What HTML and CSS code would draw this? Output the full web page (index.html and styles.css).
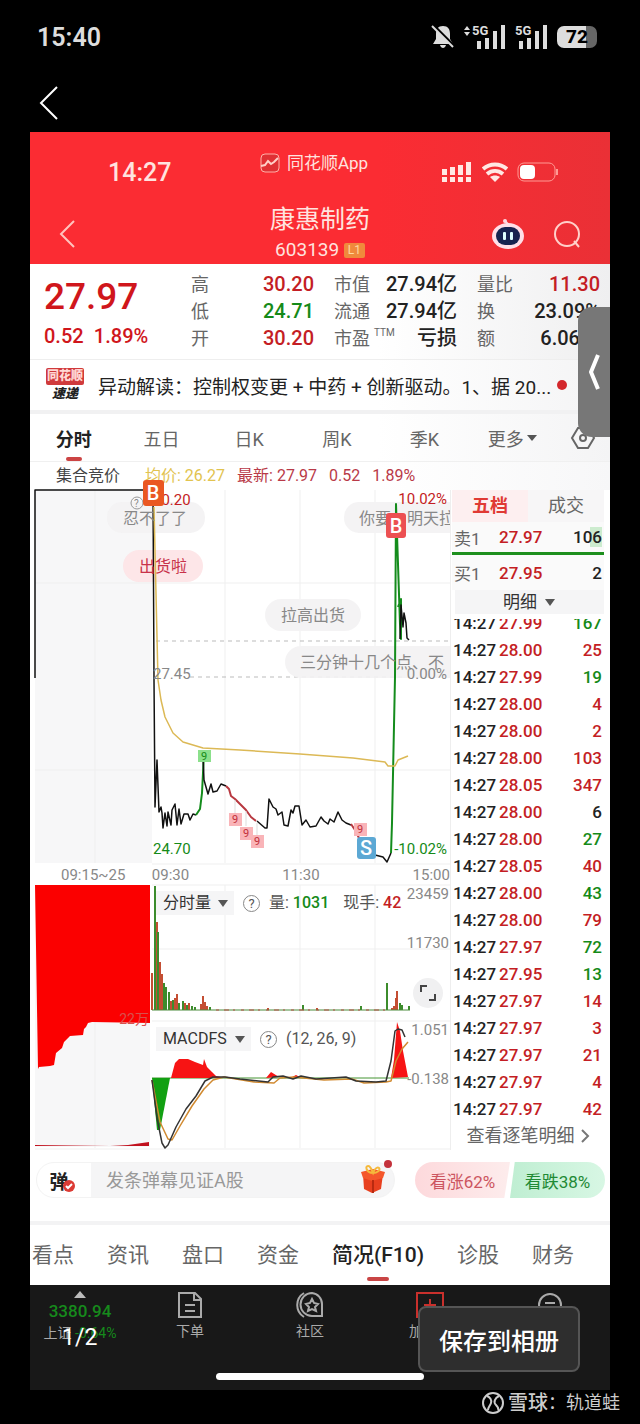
FILE: index.html
```html
<!DOCTYPE html>
<html lang="zh-CN">
<head>
    <meta charset="UTF-8">
    <meta name="viewport" content="width=device-width, initial-scale=1.0">
    <title>康惠制药 603139</title>
    <link rel="stylesheet" href="styles.css">
</head>
<body>
    <div class="status-bar">
        <span class="clock">15:40</span>
        <div class="status-icons">
            <svg width="24" height="24" viewBox="0 0 24 24">
                <path d="M12 1c-5 0-7 3-7 8v5l-3 5h20l-3-5V9c0-5-2-8-7-8zM9 20h6c-1 4-5 4-6 0z" fill="#ddd"/>
                <path d="M2 0l21 21" stroke="#000" stroke-width="3"/>
                <path d="M1 1l21 21" stroke="#ddd" stroke-width="2"/>
            </svg>
            <svg width="44" height="28" viewBox="0 0 44 28" fill="#ddd">
                <path d="M1 7l3-4 3 4zM1 9l3 4 3-4z"/>
                <text x="9" y="12" class="net">5G</text>
                <path d="M14 18h4v8h-4zM22 15h4v11h-4zM30 8h4v18h-4zM38 2h4v24h-4z"/>
            </svg>
            <svg width="34" height="28" viewBox="0 0 34 28" fill="#ddd">
                <text x="0" y="12" class="net">5G</text>
                <path d="M4 18h4v8H4zM12 15h4v11h-4zM20 8h4v18h-4zM28 2h4v24h-4z"/>
            </svg>
            <span class="battery">72</span>
        </div>
    </div>

    <div class="viewer-bar">
        <button class="icon-button" aria-label="返回">
            <svg width="20" height="34" viewBox="0 0 20 34"><path d="M18 1L2 17l16 16" fill="none" stroke="#fff" stroke-width="2"/></svg>
        </button>
    </div>

    <main class="shot">
        <header class="app-header">
            <div class="phone-status">
                <span class="phone-time">14:27</span>
                <span class="brand">
                    <svg width="20" height="20" viewBox="0 0 20 20" fill="none" stroke="#ffb0a8">
                        <rect x="1" y="1" width="18" height="18" rx="4" fill="#e03034"/>
                        <path d="M1 13l4-1 3-4 3 3 3-2 4-4" stroke="#ffd0c8" stroke-width="2"/>
                    </svg>
                    同花顺App
                </span>
                <span class="phone-icons">
                    <svg width="32" height="22" viewBox="0 0 32 22" fill="#ffe8e4">
                        <path d="M1 8h5v6H1zM9 6h5v8H9zM17 4h5v10h-5zM25 1h5v13h-5zM1 16h5v5H1zM9 16h5v5H9zM17 16h5v5h-5zM25 16h5v5h-5z"/>
                    </svg>
                    <svg width="26" height="20" viewBox="0 0 26 20" fill="none" stroke="#ffe8e4" stroke-width="4">
                        <path d="M1 7c7-6 17-6 24 0M5 12c5-4 11-4 16 0"/>
                        <path d="M13 20l-5-5c3-2 7-2 10 0z" fill="#ffe8e4" stroke="none"/>
                    </svg>
                    <svg width="42" height="20" viewBox="0 0 42 20">
                        <rect x="1" y="1" width="37" height="18" rx="6" fill="none" stroke="#ff9a94"/>
                        <rect x="3" y="3" width="15" height="14" rx="4" fill="#fff"/>
                        <path d="M40 7v6" stroke="#ff9a94" stroke-width="2"/>
                    </svg>
                </span>
            </div>
            <div class="title-bar">
                <button class="icon-button" aria-label="返回">
                    <svg width="18" height="28" viewBox="0 0 18 28"><path d="M16 1L3 14l13 13" fill="none" stroke="#ffc4be" stroke-width="2"/></svg>
                </button>
                <div class="title">
                    <h1>康惠制药</h1>
                    <p>603139 <span class="level">L1</span></p>
                </div>
                <div class="title-actions">
                    <button class="icon-button" aria-label="智能助手">
                        <svg width="34" height="32" viewBox="0 0 34 32">
                            <circle cx="14" cy="3" r="2" fill="#ffd8e0"/>
                            <path d="M14 3l4 4" stroke="#ffd8e0" stroke-width="2"/>
                            <ellipse cx="17" cy="18" rx="16" ry="13" fill="#ffdfe8"/>
                            <rect x="5" y="9" width="24" height="18" rx="9" fill="#162350"/>
                            <rect x="12" y="14" width="3" height="8" rx="1" fill="#dff"/>
                            <rect x="19" y="14" width="3" height="8" rx="1" fill="#dff"/>
                        </svg>
                    </button>
                    <button class="icon-button" aria-label="搜索">
                        <svg width="30" height="30" viewBox="0 0 30 30" fill="none" stroke="#ffd0ca" stroke-width="2">
                            <circle cx="15" cy="15" r="12"/><path d="M22 22l5 6"/>
                        </svg>
                    </button>
                </div>
            </div>
        </header>

        <section class="quote">
            <div class="last">
                <strong>27.97</strong>
                <span>0.52&ensp;1.89%</span>
            </div>
            <dl>
                <dt>高</dt><dd class="up">30.20</dd>
                <dt>低</dt><dd class="down">24.71</dd>
                <dt>开</dt><dd class="up">30.20</dd>
            </dl>
            <dl>
                <dt>市值</dt><dd>27.94亿</dd>
                <dt>流通</dt><dd>27.94亿</dd>
                <dt>市盈<sup>TTM</sup></dt><dd>亏损</dd>
            </dl>
            <dl>
                <dt>量比</dt><dd class="up">11.30</dd>
                <dt>换</dt><dd>23.09%</dd>
                <dt>额</dt><dd>6.06亿</dd>
            </dl>
        </section>

        <a class="news" href="#">
            <span class="news-logo"><b>同花顺</b><i>速递</i></span>
            <span class="news-text">异动解读：控制权变更 + 中药 + 创新驱动。1、据 20...</span>
            <span class="news-dot"></span>
        </a>

        <nav class="periods">
            <button class="active">分时</button>
            <button>五日</button>
            <button>日K</button>
            <button>周K</button>
            <button>季K</button>
            <button>更多<span class="caret"></span></button>
            <button aria-label="设置">
                <svg width="26" height="24" viewBox="0 0 26 24" fill="none" stroke="#666" stroke-width="2">
                    <path d="M8 2h10l6 10-6 10H8L2 12z"/><circle cx="13" cy="12" r="3"/>
                </svg>
            </button>
        </nav>

        <div class="legend">
            <span class="auction">集合竞价</span>
            <span class="avg">均价: 26.27</span>
            <span class="now">最新: 27.97</span>
            <span class="now">0.52</span>
            <span class="now">1.89%</span>
        </div>

        <div class="market">
            <section class="charts">
                <!-- price -->
                <svg class="chart" viewBox="30 490 420 375">
                    <rect x="35" y="490" width="117" height="373" fill="#f7f7f8"/>
                    <path class="grid" d="M95 490V863M225 490V863M300 490V863M375 490V863M35 583H450M35 770H450M152 864H450"/>
                    <path class="dash" d="M156 641H450M190 677H406"/>
                    <rect class="bubble" x="107" y="502" width="98" height="31" rx="15"/>
                    <rect class="bubble hot" x="123" y="550" width="80" height="32" rx="16"/>
                    <rect class="bubble" x="344" y="502" width="130" height="31" rx="15"/>
                    <rect class="bubble" x="265" y="599" width="96" height="32" rx="16"/>
                    <rect class="bubble" x="285" y="646" width="190" height="32" rx="16"/>

                    <path class="line" d="M35 678V490H153"/>
                    <path class="line" d="M153 490l1 190 1 127 2-47 2 52 2-5 1 6 1 15 2-15 2 13 1-14 3 13 1-15 3-6 2 21 2-16 2 15 3-10h4l2 6 3-6 3 1"/>
                    <path class="line green" d="M196 815l4-6 2-16 2-40"/>
                    <path class="line" d="M203 756l1 24 4 14 3-10 2 8 4-1 4-7 5 2"/>
                    <path class="line red" d="M226 786l3 3 2 7 4 3 5 5 6 6 5 7 5 4"/>
                    <path class="line" d="M257 821l8 7h2l2-29 4 8 3 2 2 6 4-3 2 13 4 1 3-16 2 3 2-7h4l3 19 4-5 4 7 6-1 5-9 3 4 4 3 2-5 4 3 4-10 4 8 4 3 5 2"/>
                    <path class="line red" d="M351 824l4 6 3 6 2 4"/>
                    <path class="line" d="M375 855l8 2 4 5 4-9"/>
                    <path class="line green" d="M391 853l1-30 3-146 1-173 4 120 1 15v-40l-3 8"/>
                    <path class="line" d="M400 639l1-34 2 22 1-14 2 10 1 15 2 2"/>
                    <path class="average" d="M154 507l4 173 3 20 4 17 8 16 10 9 20 6 37 2 60 4 53 4 32 4 3 4h7l3-6 10-4"/>
                    <path d="M235 800v13M246 811v15M257 823v12" stroke="#ddd"/>

                    <g class="bubble-text">
                        <circle cx="137" cy="503" r="6" fill="none" stroke="#999"/>
                        <text x="134" y="507" font-size="10">?</text>
                        <text x="123" y="524">忍不了了</text>
                        <text x="139" y="572" class="hot">出货啦</text>
                        <text x="359" y="524">你要　明天拉</text>
                        <text x="281" y="621">拉高出货</text>
                        <text x="300" y="668">三分钟十几个点、不</text>
                    </g>
                    <g class="axis">
                        <text x="153" y="505" class="up">30.20</text>
                        <text x="153" y="679">27.45</text>
                        <text x="153" y="854" class="down">24.70</text>
                        <g text-anchor="end">
                            <text x="447" y="504" class="up">10.02%</text>
                            <text x="447" y="679">0.00%</text>
                            <text x="447" y="854" class="down">-10.02%</text>
                        </g>
                    </g>
                    <g class="nine">
                        <rect x="198" y="750" width="13" height="12" fill="#8be08b"/><text x="204" y="760" class="down">9</text>
                        <rect x="229" y="813" width="13" height="13"/><text x="235" y="823">9</text>
                        <rect x="240" y="827" width="13" height="13"/><text x="246" y="837">9</text>
                        <rect x="251" y="835" width="13" height="13"/><text x="257" y="845">9</text>
                        <rect x="354" y="823" width="13" height="13"/><text x="360" y="833">9</text>
                    </g>
                    <g class="trade">
                        <rect x="143" y="480" width="21" height="26" rx="3" fill="#ea5722"/><text x="153" y="500">B</text>
                        <rect x="386" y="513" width="20" height="25" rx="3" fill="#ec5052"/><text x="396" y="533">B</text>
                        <rect x="357" y="837" width="19" height="22" rx="3" fill="#5ca8d4"/><text x="366" y="855">S</text>
                    </g>
                </svg>

                <div class="times">
                    <span>09:15~25</span>
                    <div><span>09:30</span><span>11:30</span><span>15:00</span></div>
                </div>

                <div class="indicators">
                    <!-- volume and MACD -->
                    <svg class="chart" viewBox="30 885 420 265">
                        <rect x="35" y="885" width="115" height="262" fill="#f7f7f8"/>
                        <path class="grid" d="M95 885V1148M225 885V1148M300 885V1148M375 885V1148M152 949H450M152 1021H450M35 1149H450M152 885H450"/>
                        <path d="M35 885H150V1023L92 1022 88 1023 86 1027 84 1029 83 1035 70 1036 64 1042 62 1048 56 1053 54 1065 50 1066 39 1067 38 1069Z" fill="#fb0000"/>
                        <path d="M35 1145l75 1 18-1 21-3v4H35z" fill="#c1121f"/>
                        <text x="149" y="1024" class="faint" text-anchor="end">22万</text>

                        <path d="M152 1010V973M157 1010V922M160 1010V962M162 1010V974M171 1010V1001M175 1010V998M177 1010V994M185 1010V1003M189 1010V1003M201 1010V1004M203 1010V996M205 1010V1002M207 1010V1006M268 1010V1008M317 1010V1008M392 1010V1008M394 1010V1006M396 1010V998M397 1010V991" stroke="#c44e33" stroke-width="2" fill="none"/>
                        <path d="M155 1010V886M158 1010V932M164 1010V983M166 1010V987M169 1010V992M173 1010V1000M179 1010V1003M183 1010V1001M187 1010V1005M192 1010V1006M195 1010V1007M210 1010V1007M303 1010V1005M361 1010V1006M387 1010V983M400 1010V1003M402 1010V1005M409 1010V1006" stroke="#3c8c2c" stroke-width="2" fill="none"/>
                        <path d="M152 1010H410" stroke="#4c8b3c" stroke-width="1" fill="none"/>
                        <path d="M216 1010H390" stroke="#b64a42" stroke-dasharray="3 5 5 4 2 6" fill="none"/>

                        <path d="M152 1078H409" stroke="#459433"/>
                        <path d="M152 1078h18l-10 52h-3z" fill="#12a012"/>
                        <path d="M171 1078l4-15 4-4h9l7 3 8 3 1-6 3 8 5 5 4 4 9 2zM266 1078l5-6 8 5zM290 1078l6-3 6 3zM391 1078l3-18 3-38 3 9 3 20 5 26z" fill="#f71414"/>
                        <path class="thin" stroke="#d18a30" d="M152 1080l8 42 8 17 4 1 8-14 12-20 12-17 9-9 11-3 30 5 20 1 6-5 14-1 30 3 28-1 12 4 22-1 5-1 5-20 6-12 6-7"/>
                        <path class="thin" stroke="#333" d="M152 1080l5 38 5 25 3 5 3-3 8-18 10-18 10-13 9-15 8-4h12l15 2 28 3 5-5 10-1 10 3 8-3 15 3 30-2 10 4 20 1 10-1 5-20 4-30 3-2 4 1 3 7"/>

                        <g class="axis" text-anchor="end">
                            <text x="449" y="899">23459</text>
                            <text x="449" y="948">11730</text>
                            <text x="449" y="1035">1.051</text>
                            <text x="449" y="1084">-0.138</text>
                        </g>
                    </svg>
                    <div class="tools volume-tools">
                        <label class="picker"><select aria-label="副图指标一"><option>分时量</option></select></label>
                        <span class="help">?</span>
                        <span>量: <b class="down">1031</b></span>
                        <span>现手: <b class="up">42</b></span>
                    </div>
                    <div class="tools macd-tools">
                        <label class="picker wide"><select aria-label="副图指标二"><option>MACDFS</option></select></label>
                        <span class="help">?</span>
                        <span>(12, 26, 9)</span>
                    </div>
                    <button class="expand" aria-label="全屏">
                        <svg width="18" height="18" viewBox="0 0 18 18" fill="none" stroke="#444" stroke-width="2"><path d="M2 8V2h6M16 10v6h-6"/></svg>
                    </button>
                </div>
            </section>

            <section class="book">
                <div class="book-tabs">
                    <button class="active">五档</button>
                    <button>成交</button>
                </div>
                <table class="level-row">
                    <tr><th>卖1</th><td class="up">27.97</td><td><span class="flash">106</span></td></tr>
                </table>
                <table class="level-row bid">
                    <tr><th>买1</th><td class="up">27.95</td><td>2</td></tr>
                </table>
                <label class="picker detail"><select aria-label="成交明细"><option>明细</option></select></label>
                <div class="ticks">
                    <table>
                        <tr><td>14:27</td><td>27.99</td><td class="down">167</td></tr>
                        <tr><td>14:27</td><td>28.00</td><td class="up">25</td></tr>
                        <tr><td>14:27</td><td>27.99</td><td class="down">19</td></tr>
                        <tr><td>14:27</td><td>28.00</td><td class="up">4</td></tr>
                        <tr><td>14:27</td><td>28.00</td><td class="up">2</td></tr>
                        <tr><td>14:27</td><td>28.00</td><td class="up">103</td></tr>
                        <tr><td>14:27</td><td>28.05</td><td class="up">347</td></tr>
                        <tr><td>14:27</td><td>28.00</td><td>6</td></tr>
                        <tr><td>14:27</td><td>28.00</td><td class="down">27</td></tr>
                        <tr><td>14:27</td><td>28.05</td><td class="up">40</td></tr>
                        <tr><td>14:27</td><td>28.00</td><td class="down">43</td></tr>
                        <tr><td>14:27</td><td>28.00</td><td class="up">79</td></tr>
                        <tr><td>14:27</td><td>27.97</td><td class="down">72</td></tr>
                        <tr><td>14:27</td><td>27.95</td><td class="down">13</td></tr>
                        <tr><td>14:27</td><td>27.97</td><td class="up">14</td></tr>
                        <tr><td>14:27</td><td>27.97</td><td class="up">3</td></tr>
                        <tr><td>14:27</td><td>27.97</td><td class="up">21</td></tr>
                        <tr><td>14:27</td><td>27.97</td><td class="up">4</td></tr>
                        <tr><td>14:27</td><td>27.97</td><td class="up">42</td></tr>
                    </table>
                </div>
                <a class="more" href="#">查看逐笔明细
                    <svg width="9" height="14" viewBox="0 0 9 14"><path d="M1 1l6 6-6 6" fill="none" stroke="#777" stroke-width="2"/></svg>
                </a>
            </section>
        </div>

        <div class="comment-bar">
            <div class="comment-box">
                <button class="danmu" aria-label="弹幕开关">弹
                    <svg width="12" height="12" viewBox="0 0 12 12"><circle cx="6" cy="6" r="6" fill="#dc3b34"/><path d="M3 6l2 2 4-4" fill="none" stroke="#fff" stroke-width="2"/></svg>
                </button>
                <input type="text" placeholder="发条弹幕见证A股" aria-label="发弹幕">
                <button class="gift" aria-label="礼物">
                    <svg width="30" height="34" viewBox="0 0 30 34">
                        <path d="M5 11l10 4 10-4-2 15-9 4-8-4z" fill="#e8401f"/>
                        <path d="M3 9l12-3 12 3-2 6-11 3-9-3z" fill="#f4572b"/>
                        <path d="M15 17v13" stroke="#b82a10" stroke-width="2"/>
                        <path d="M14 10C8 9 7 3 10 3s4 5 5 7c1-3 4-7 6-5s-2 5-6 5" fill="none" stroke="#f5b93c" stroke-width="2"/>
                    </svg>
                </button>
            </div>
            <div class="vote">
                <button class="rise">看涨62%</button>
                <button class="fall">看跌38%</button>
            </div>
        </div>

        <nav class="sections">
            <a href="#">看点</a>
            <a href="#">资讯</a>
            <a href="#">盘口</a>
            <a href="#">资金</a>
            <a href="#" class="active">简况(F10)</a>
            <a href="#">诊股</a>
            <a href="#">财务</a>
        </nav>

        <footer class="app-nav">
            <div class="nav-row">
                <a href="#" class="index">
                    <span class="tri"></span>
                    <b>3380.94</b>
                    <span>上证 <em>-0.64%</em></span>
                </a>
                <a href="#">
                    <svg width="26" height="28" viewBox="0 0 26 28" fill="none" stroke="#aaa" stroke-width="2"><path d="M2 2h16l6 6v18H2zM17 2v7h7M8 14h10M8 20h10"/></svg>
                    下单
                </a>
                <a href="#">
                    <svg width="28" height="28" viewBox="0 0 28 28" fill="none" stroke="#aaa" stroke-width="2"><path d="M16 2a11 11 0 1 0 0 23h10V13a11 11 0 0 0-10-11zM8 2a14 14 0 0 0 0 24"/><path d="M16 8l2 4 4 1-3 3 1 4-4-2-4 2 1-4-3-3 4-1z"/></svg>
                    社区
                </a>
                <a href="#">
                    <svg width="28" height="28" viewBox="0 0 28 28" fill="none" stroke="#c9302c" stroke-width="2"><path d="M1 2h26v24H1zM14 8v12M8 14h12"/></svg>
                    加自选
                </a>
                <a href="#">
                    <svg width="26" height="28" viewBox="0 0 26 28" fill="none" stroke="#aaa" stroke-width="2"><circle cx="13" cy="14" r="11"/><path d="M8 12h10M8 16h10"/></svg>
                    更多
                </a>
            </div>
            <div class="home-indicator"></div>
        </footer>

        <button class="drawer" aria-label="展开">
            <svg width="14" height="38" viewBox="0 0 14 38"><path d="M11 2L4 19l7 17" fill="none" stroke="#fff" stroke-width="4" stroke-linejoin="round"/></svg>
        </button>
        <span class="page-count">1/2</span>
        <button class="save">保存到相册</button>
    </main>

    <div class="watermark">
        <svg width="24" height="24" viewBox="0 0 24 24" fill="none" stroke="#ccc" stroke-width="2">
            <circle cx="12" cy="12" r="10"/><path d="M6 5c3 1 5 4 4 7s-3 4-3 7M18 5c-4 2-6 6-3 9 2 2 3 3 2 5"/>
        </svg>
        <b>雪球</b><span>：轨道蛙</span>
    </div>
</body>
</html>
```

FILE: styles.css
```css
* {
    box-sizing: border-box;
}

body {
    margin: 0;
    background-color: #000;
    color: #222;
    font-family: Roboto, "Noto Sans CJK SC", sans-serif;
    font-size: 16px;
}

button, input, select {
    margin: 0;
    padding: 0;
    border: none;
    background: none;
    color: inherit;
    font: inherit;
}

button {
    cursor: pointer;
}

a {
    color: inherit;
    text-decoration: none;
}

svg {
    display: block;
    flex: none;
}

table {
    width: 100%;
    border-collapse: collapse;
}

.icon-button {
    display: block;
}

/* outer phone */
.status-bar {
    display: flex;
    justify-content: space-between;
    align-items: center;
    height: 74px;
    padding: 0 43px 0 37px;
    color: #ddd;
}

.clock {
    font-size: 25px;
    font-weight: 600;
}

.status-icons {
    display: flex;
    align-items: center;
    gap: 8px;
}

.net {
    font-size: 13px;
    font-weight: 700;
}

.battery {
    width: 40px;
    height: 22px;
    border-radius: 7px;
    background: linear-gradient(to right, #ddd 72%, #666 72%);
    color: #000;
    font-size: 19px;
    font-weight: 800;
    line-height: 22px;
    text-align: center;
}

.viewer-bar {
    display: flex;
    align-items: center;
    height: 58px;
    padding: 0 39px;
}

.shot {
    position: relative;
    margin: 0 30px;
    background-color: #fff;
}

/* red header */
.app-header {
    background: linear-gradient(to right, #fb2c33 60%, #ea3036);
    color: #ffe3df;
}

.phone-status {
    display: grid;
    grid-template-columns: 1fr auto 1fr;
    align-items: center;
    height: 72px;
    padding: 8px 51px 0 39px;
}

.phone-time {
    padding-left: 39px;
    font-size: 25px;
    font-weight: 500;
}

.brand {
    display: flex;
    align-items: center;
    gap: 7px;
    height: 24px;
    margin-bottom: 18px;
    font-size: 17px;
    line-height: 24px;
}

.phone-icons {
    display: flex;
    justify-content: flex-end;
    align-items: center;
    gap: 9px;
}

.title-bar {
    display: grid;
    grid-template-columns: 1fr auto 1fr;
    align-items: center;
    height: 60px;
    padding: 0 28px;
}

.title {
    text-align: center;
}

.title h1 {
    margin: 0;
    font-size: 25px;
    font-weight: 400;
    line-height: 32px;
}

.title p {
    margin: 0;
    font-size: 19px;
    line-height: 28px;
}

.level {
    display: inline-block;
    width: 21px;
    border-radius: 2px;
    background-color: #f08a3c;
    color: #ffd9a0;
    font-size: 12px;
    line-height: 15px;
    vertical-align: 2px;
}

.title-actions {
    display: flex;
    justify-content: flex-end;
    align-items: center;
    gap: 27px;
}

/* quote */
.quote {
    display: flex;
    gap: 20px;
    padding: 7px 10px 7px 14px;
    border-bottom: 1px solid #eee;
    background: linear-gradient(to right, #fff 60%, #efeff0);
}

.last {
    width: 127px;
    color: #d0161c;
    white-space: nowrap;
}

.last strong {
    display: block;
    font-size: 37px;
    font-weight: 500;
    line-height: 52px;
}

.last span {
    display: block;
    font-size: 20px;
    font-weight: 500;
    line-height: 27px;
}

.quote dl {
    display: grid;
    grid-template-columns: 36px 1fr;
    grid-auto-rows: 27px;
    flex: 1;
    margin: 0;
    line-height: 27px;
    white-space: nowrap;
}

.quote dt {
    color: #666;
    font-size: 18px;
}

.quote sup {
    margin-left: 4px;
    font-size: 10px;
    line-height: 10px;
    vertical-align: 9px;
}

.quote dd {
    margin: 0;
    font-size: 20px;
    font-weight: 500;
    text-align: right;
}

.news {
    display: flex;
    align-items: center;
    height: 54px;
    padding: 0 16px;
    border-bottom: 4px solid #f1f1f2;
    background: linear-gradient(to right, #fff 60%, #f4f4f5);
}

.news-logo {
    width: 38px;
    margin-right: 14px;
    font-size: 13px;
    font-weight: 900;
    line-height: 17px;
    text-align: center;
}

.news-logo b, .news-logo i {
    display: block;
}

.news-logo b {
    border-radius: 2px;
    background-color: #d03a3c;
    color: #ffd8d4;
    font-size: 12px;
}

.news-text {
    flex: 1;
    overflow: hidden;
    font-size: 19px;
    white-space: nowrap;
}

.news-dot {
    width: 10px;
    height: 10px;
    margin: 0 27px 0 3px;
    border-radius: 50%;
    background-color: #d3272c;
}

/* period tabs */
.periods {
    display: grid;
    grid-template-columns: repeat(6, 1fr) 54px;
    height: 48px;
    border-bottom: 1px solid #f0f0f0;
    background: linear-gradient(to right, #fff 60%, #f4f4f5);
}

.periods button {
    display: flex;
    justify-content: center;
    align-items: center;
    position: relative;
    color: #666;
    font-size: 18px;
}

.periods .active {
    color: #222;
    font-weight: 700;
}

.periods .active::after {
    content: "";
    position: absolute;
    bottom: 0;
    width: 16px;
    height: 4px;
    border-radius: 2px;
    background-color: #cc4444;
}

.caret {
    margin-left: 3px;
    border: 5px solid transparent;
    border-top: 6px solid #555;
    border-bottom: 0;
}

.legend {
    display: flex;
    gap: 12px;
    height: 28px;
    padding-left: 26px;
    background: linear-gradient(to right, #fff 60%, #f7f7f8);
    line-height: 28px;
}

.auction {
    margin-right: 13px;
    color: #444;
}

.avg {
    color: #e2c34f;
}

.now {
    color: #b93a48;
}

/* charts */
.market {
    display: grid;
    grid-template-columns: 1fr 160px;
}

.charts {
    min-width: 0;
}

.chart {
    width: 100%;
    height: auto;
    overflow: visible;
}

.grid {
    fill: none;
    stroke: #efefef;
}

.dash {
    fill: none;
    stroke: #bbb;
    stroke-dasharray: 4 4;
}

.line {
    fill: none;
    stroke: #111;
    stroke-width: 1.5;
    stroke-linejoin: round;
}

.line.green {
    stroke: #148c1c;
    stroke-width: 2;
}

.line.red {
    stroke: #b83840;
    stroke-width: 2;
}

.average {
    fill: none;
    stroke: #dcb956;
    stroke-width: 1.5;
    stroke-linejoin: round;
}

.thin {
    fill: none;
    stroke-width: 1.5;
    stroke-linejoin: round;
}

.bubble {
    fill: #f3f2f3;
    fill-opacity: 0.9;
}

.bubble.hot {
    fill: #fde3e6;
}

.bubble-text {
    fill: #888;
    font-size: 16px;
}

.bubble-text .hot {
    fill: #c8324a;
}

.axis {
    fill: #888;
    font-size: 15px;
}

.faint {
    fill: #d8504c;
    font-size: 14px;
}

.nine {
    fill: #f9b4b8;
    font-size: 11px;
    text-anchor: middle;
}

.nine text {
    fill: #c22e3a;
}

.trade text {
    fill: #fff;
    font-size: 20px;
    font-weight: 500;
    text-anchor: middle;
}

.times {
    display: grid;
    grid-template-columns: 29% 71%;
    color: #888;
    font-size: 15px;
    line-height: 20px;
}

.times > span {
    padding-left: 31px;
}

.times div {
    display: flex;
    justify-content: space-between;
}

.indicators {
    position: relative;
}

.tools {
    display: flex;
    align-items: center;
    position: absolute;
    left: 30%;
    height: 24px;
    color: #555;
    line-height: 24px;
    white-space: nowrap;
}

.tools b {
    font-weight: 500;
}

.tools span + span {
    margin-left: 9px;
}

.tools span + span + span {
    margin-left: 14px;
}

.volume-tools {
    top: 6px;
}

.macd-tools {
    top: 142px;
}

.picker {
    display: block;
    position: relative;
    width: 78px;
    margin-right: 9px;
    background-color: #f5f5f6;
    color: #333;
    line-height: 24px;
}

.picker select {
    width: 100%;
    height: 24px;
    padding-left: 7px;
    appearance: none;
    line-height: 24px;
}

.picker::after {
    content: "";
    position: absolute;
    top: 9px;
    right: 6px;
    border: 5px solid transparent;
    border-top: 7px solid #555;
    border-bottom: 0;
    pointer-events: none;
}

.picker.wide {
    width: 95px;
}

.help {
    width: 17px;
    height: 17px;
    border: 1px solid #888;
    border-radius: 50%;
    font-size: 13px;
    line-height: 15px;
    text-align: center;
}

.expand {
    display: flex;
    justify-content: center;
    align-items: center;
    position: absolute;
    top: 93px;
    right: 7px;
    width: 30px;
    height: 30px;
    border-radius: 50%;
    background-color: #f0f0f1;
}

/* order book */
.book {
    position: relative;
    padding: 0 6px 0 1px;
    border-left: 1px solid #eee;
    background-color: #fff;
    font-size: 17px;
}

.book-tabs {
    display: grid;
    grid-template-columns: 1fr 1fr;
    background-color: #f7f6f7;
    color: #666;
    font-size: 18px;
    line-height: 32px;
}

.book-tabs .active {
    background-color: #fdeff0;
    color: #e03a34;
    font-weight: 700;
}

.book td {
    padding: 0;
}

.book td:last-child {
    padding-right: 2px;
    text-align: right;
}

.level-row {
    height: 30px;
    background-color: #fafafa;
    font-weight: 500;
}

.level-row th {
    width: 47px;
    padding: 0 0 0 2px;
    color: #666;
    font-weight: 400;
    text-align: left;
}

.level-row.bid {
    height: 38px;
    border-top: 3px solid #1d8f1d;
}

.flash {
    background: linear-gradient(to right, transparent 60%, #cdeccf 60%);
}

.picker.detail {
    width: auto;
    margin: 0 0 5px 3px;
}

.detail select {
    padding: 0 19px 0 0;
    font-size: 17px;
    text-align-last: center;
}

.detail::after {
    right: 49px;
}

.ticks {
    overflow: hidden;
}

.ticks table {
    margin-top: -9px;
    font-weight: 500;
}

.ticks tr {
    height: 27px;
}

.ticks td {
    line-height: 27px;
}

.ticks td:first-child {
    width: 47px;
    padding-left: 1px;
}

.ticks td:nth-child(2) {
    color: #c41e24;
}

.more {
    display: flex;
    justify-content: center;
    align-items: center;
    gap: 6px;
    color: #666;
    font-size: 18px;
    line-height: 26px;
    white-space: nowrap;
}

/* comment bar */
.comment-bar {
    display: flex;
    align-items: center;
    gap: 20px;
    padding: 12px 5px 23px 6px;
    border-bottom: 4px solid #f3f3f4;
}

.comment-box {
    display: flex;
    align-items: center;
    flex: 1;
    position: relative;
    height: 36px;
    border: 1px solid #f3f3f3;
    border-radius: 18px;
    background: linear-gradient(to right, #fff 54px, #f5f5f6 54px);
}

.comment-box::after {
    content: "";
    position: absolute;
    top: -3px;
    right: 2px;
    width: 8px;
    height: 8px;
    border-radius: 50%;
    background-color: #c4323c;
}

.danmu {
    position: relative;
    width: 54px;
    padding-right: 10px;
    font-size: 19px;
    font-weight: 700;
}

.danmu svg {
    position: absolute;
    right: 16px;
    bottom: 2px;
}

.comment-box input {
    flex: 1;
    min-width: 0;
    padding-left: 15px;
    font-size: 18px;
}

.comment-box input::placeholder {
    color: #999;
}

.gift {
    margin-right: 6px;
}

.vote {
    display: flex;
    width: 190px;
}

.vote button {
    flex: 1;
    height: 36px;
    font-size: 17px;
}

.rise {
    border-radius: 18px 0 0 18px;
    background: linear-gradient(to right, #fdd9dc, #fdecec);
    color: #cc5560;
    clip-path: polygon(0 0, 100% 0, 94% 100%, 0 100%);
}

.fall {
    border-radius: 0 18px 18px 0;
    background: linear-gradient(to right, #bfeed2, #d8f7e4);
    color: #1f8a35;
    clip-path: polygon(5% 0, 100% 0, 100% 100%, 0 100%);
}

.sections {
    display: flex;
    gap: 33px;
    overflow: hidden;
    height: 60px;
    padding-left: 2px;
    color: #666;
    font-size: 21px;
    line-height: 60px;
    white-space: nowrap;
}

.sections .active {
    position: relative;
    color: #222;
    font-weight: 500;
}

.sections .active::after {
    content: "";
    position: absolute;
    bottom: 4px;
    left: 50%;
    width: 22px;
    height: 4px;
    margin-left: -11px;
    border-radius: 2px;
    background-color: #c94545;
}

/* bottom navigation */
.app-nav {
    height: 105px;
    padding-top: 6px;
    background-color: #181818;
    color: #aaa;
}

.nav-row {
    display: grid;
    grid-template-columns: 100px repeat(4, 1fr);
    height: 82px;
}

.nav-row a {
    display: flex;
    flex-direction: column;
    align-items: center;
    gap: 0;
    font-size: 14px;
    line-height: 24px;
}

.nav-row .index {
    line-height: 22px;
    white-space: nowrap;
}

.tri {
    border: 6px solid transparent;
    border-bottom: 7px solid #bbb;
    border-top: 0;
    margin-bottom: 2px;
}

.index b {
    color: #168a1c;
    font-size: 17px;
    font-weight: 500;
}

.index em {
    color: #168a1c;
    font-style: normal;
}

.home-indicator {
    width: 36%;
    height: 7px;
    margin: 0 auto;
    border-radius: 4px;
    background-color: #fff;
}

/* price colours */
.up {
    color: #c41e24;
    fill: #c41e24;
}

.down, .nine .down {
    color: #158a18;
    fill: #158a18;
}

/* things floating over the picture */
.drawer {
    display: flex;
    justify-content: center;
    align-items: center;
    position: absolute;
    top: 175px;
    right: 0;
    width: 32px;
    height: 130px;
    border-radius: 14px 0 0 14px;
    background-color: #777;
}

.page-count {
    position: absolute;
    bottom: 38px;
    left: 32px;
    color: #fff;
    font-size: 23px;
    line-height: 28px;
}

.save {
    position: absolute;
    right: 30px;
    bottom: 18px;
    width: 162px;
    height: 66px;
    border: 2px solid #555;
    border-radius: 8px;
    background-color: #2e2e2e;
    color: #fff;
    font-size: 24px;
    font-weight: 500;
}

.watermark {
    display: flex;
    justify-content: flex-end;
    align-items: center;
    height: 34px;
    padding: 0 20px 8px 0;
    color: #ccc;
    font-size: 18px;
    line-height: 24px;
}

.watermark b {
    margin-left: 3px;
    font-size: 20px;
    font-weight: 500;
}
```
